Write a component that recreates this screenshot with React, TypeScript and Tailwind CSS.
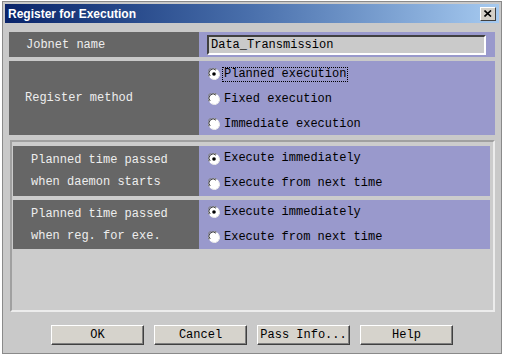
import React from 'react';

const mono = { fontFamily: '"Liberation Mono", "Courier New", monospace' };

function Radio({ checked }: { checked?: boolean }) {
  return (
    <svg width="12" height="12" viewBox="0 0 12 12" className="shrink-0">
      <circle cx="6" cy="6" r="5.5" fill="#ffffff" />
      <path d="M1.2 8.5 A5 5 0 0 1 8.5 1.2" fill="none" stroke="#808080" strokeWidth="1" />
      <path d="M2.2 8 A4 4 0 0 1 8 2.2" fill="none" stroke="#404040" strokeWidth="1" />
      <path d="M10.6 3.6 A5 5 0 0 1 3.6 10.6" fill="none" stroke="#e8e8e8" strokeWidth="1" />
      {checked && <circle cx="6" cy="6" r="1.8" fill="#000000" />}
    </svg>
  );
}

function Option({ label, checked, focus }: { label: string; checked?: boolean; focus?: boolean }) {
  return (
    <div className="flex items-center h-[15px]">
      <Radio checked={checked} />
      <span
        className={`ml-[2px] px-[1px] text-[12px] leading-[13px] text-black ${
          focus ? 'border border-dotted border-black' : 'border border-transparent'
        }`}
      >
        {label}
      </span>
    </div>
  );
}

function Btn({ label }: { label: string }) {
  return (
    <button
      className="w-[93px] h-[20px] bg-[#d6d3cc] text-[12px] text-black border border-t-white border-l-white border-b-[#404040] border-r-[#404040] shadow-[inset_-1px_-1px_0_#808080]"
      style={mono}
    >
      {label}
    </button>
  );
}

export default function App() {
  return (
    <div className="w-[505px] h-[359px] bg-white">
      <div className="ml-[2px] mt-[1px] w-[500px] h-[353px] bg-[#c9c9c9] border border-[#8a8a8a] p-[2px] flex flex-col">
        <div className="h-[19px] flex items-center justify-between bg-gradient-to-r from-[#0a246a] via-[#4a70ac] to-[#a6caf0] pl-[3px] pr-[3px]">
          <span
            className="text-white font-bold text-[12px]"
            style={{ fontFamily: '"Liberation Sans", Arial, sans-serif' }}
          >
            Register for Execution
          </span>
          <div className="w-[16px] h-[14px] bg-[#d4d0c8] border border-t-white border-l-white border-b-[#404040] border-r-[#404040] flex items-center justify-center">
            <svg width="8" height="7" viewBox="0 0 8 7">
              <path d="M0.5 0.5 L7 6.5 M7 0.5 L0.5 6.5" stroke="#000" strokeWidth="1.6" />
            </svg>
          </div>
        </div>

        <div className="flex-1 px-[4px] pt-[9px] flex flex-col" style={mono}>
          <div className="h-[25px] flex">
            <div className="w-[190px] bg-[#666666] flex items-center pl-[17px] text-[12px] text-[#eeeeee]">
              Jobnet name
            </div>
            <div className="flex-1 bg-[#9999cc] flex items-center pl-[8px] pr-[9px]">
              <div className="flex-1 h-[20px] bg-[#cacaca] border-2 border-t-[#404040] border-l-[#404040] border-b-white border-r-white flex items-center pl-[2px] text-[12px] text-black">
                Data_Transmission
              </div>
            </div>
          </div>

          <div className="h-[74px] flex mt-[4px]">
            <div className="w-[190px] bg-[#666666] flex items-center pl-[16px] text-[12px] text-[#eeeeee]">
              Register method
            </div>
            <div className="flex-1 bg-[#9999cc] flex flex-col justify-center gap-[10px] pl-[9px] pt-[2px]">
              <Option label="Planned execution" checked focus />
              <Option label="Fixed execution" />
              <Option label="Immediate execution" />
            </div>
          </div>

          <div className="mt-[5px] ml-[1px] h-[172px] border-2 border-t-[#a0a0a0] border-l-[#a0a0a0] border-b-[#ececec] border-r-[#ececec] bg-[#cccccc] pt-[4px] pl-[1px] pr-[3px] flex flex-col gap-[4px]">
            {[
              ['Planned time passed', 'when daemon starts'],
              ['Planned time passed', 'when reg. for exe.'],
            ].map((lines, i) => (
              <div key={i} className={`${i === 0 ? 'h-[50px]' : 'h-[49px]'} flex`}>
                <div className="w-[186px] bg-[#666666] flex flex-col justify-center pl-[18px] text-[12px] leading-[22px] text-[#eeeeee]">
                  <span>{lines[0]}</span>
                  <span>{lines[1]}</span>
                </div>
                <div className="flex-1 bg-[#9999cc] flex flex-col justify-center gap-[10px] pl-[9px]">
                  <Option label="Execute immediately" checked />
                  <Option label="Execute from next time" />
                </div>
              </div>
            ))}
          </div>

          <div className="mt-[13px] flex justify-center gap-[10px]">
            <Btn label="OK" />
            <Btn label="Cancel" />
            <Btn label="Pass Info..." />
            <Btn label="Help" />
          </div>
        </div>
      </div>
    </div>
  );
}
